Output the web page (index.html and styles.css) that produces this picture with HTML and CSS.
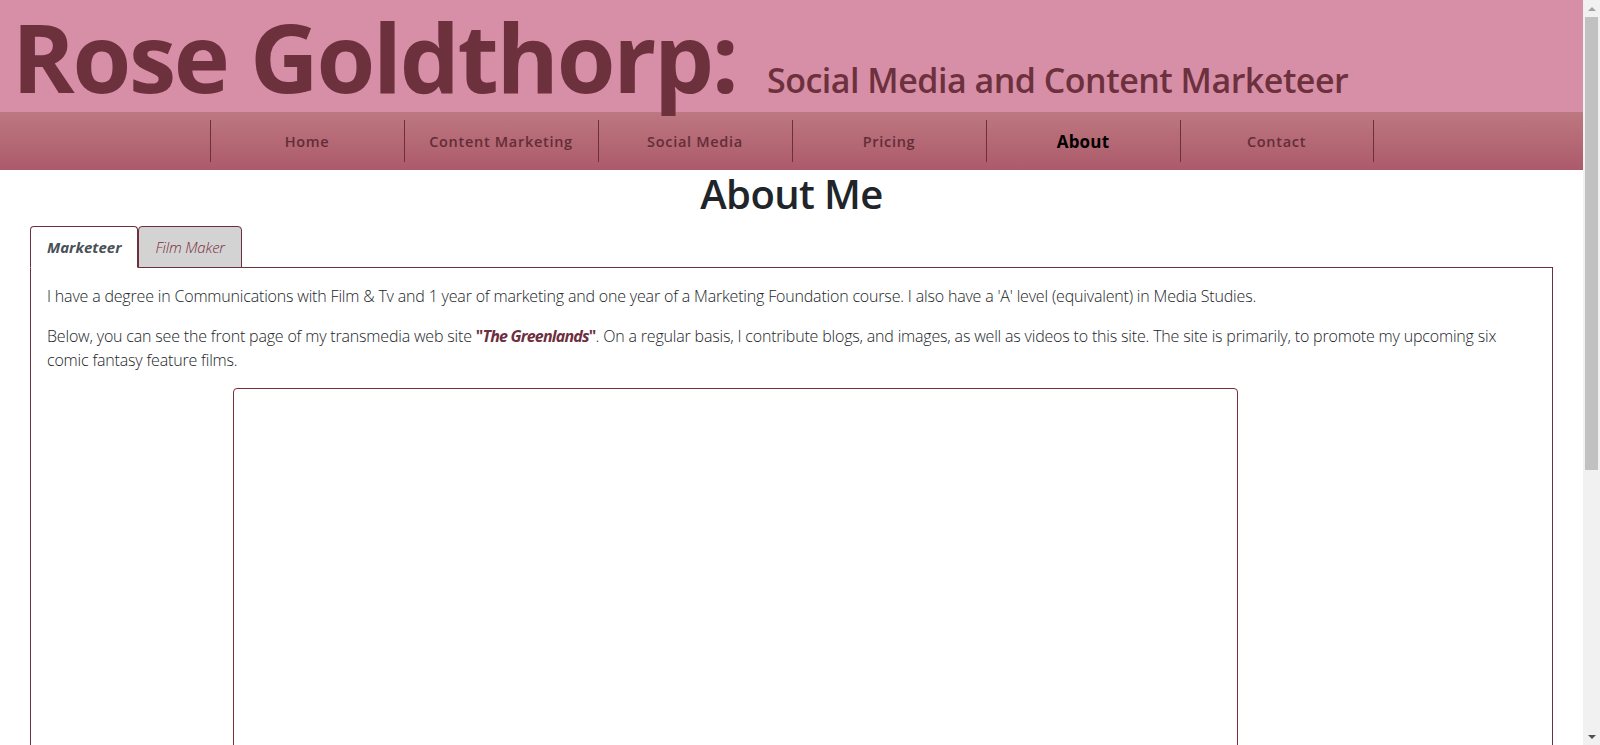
FILE: index.html
```html
<!DOCTYPE html>
<html lang="en">
<head>
<meta charset="utf-8">
<title>Rose Goldthorp - About</title>
<link rel="stylesheet" href="styles.css">
</head>
<body>
<div class="window">
  <div class="viewport">
    <header class="site-header">
      <h1 class="brand">Rose Goldthorp: <span class="tagline">Social Media and Content Marketeer</span></h1>
    </header>
    <nav class="main-nav">
      <ul class="nav-list">
        <li class="nav-item"><a class="nav-link" href="#">Home</a></li>
        <li class="nav-item"><a class="nav-link" href="#">Content Marketing</a></li>
        <li class="nav-item"><a class="nav-link" href="#">Social Media</a></li>
        <li class="nav-item"><a class="nav-link" href="#">Pricing</a></li>
        <li class="nav-item"><a class="nav-link nav-link-active" href="#">About</a></li>
        <li class="nav-item nav-item-last"><a class="nav-link" href="#">Contact</a></li>
      </ul>
    </nav>
    <main class="page">
      <h2 class="page-title">About Me</h2>
      <ul class="tabs">
        <li class="tab tab-active">Marketeer</li>
        <li class="tab tab-inactive">Film Maker</li>
      </ul>
      <section class="tab-panel">
        <p class="copy">I have a degree in Communications with Film &amp; Tv and 1 year of marketing and one year of a Marketing Foundation course. I also have a 'A' level (equivalent) in Media Studies.</p>
        <p class="copy">Below, you can see the front page of my transmedia web site <strong class="site-name">"<em>The Greenlands</em>"</strong>. On a regular basis, I contribute blogs, and images, as well as videos to this site. The site is primarily, to promote my upcoming six comic fantasy feature films.</p>
        <div class="frame"></div>
      </section>
    </main>
  </div>
  <div class="scrollbar" aria-hidden="true">
    <div class="sb-button"><span class="sb-arrow sb-arrow-up"></span></div>
    <div class="sb-track"><div class="sb-thumb"></div></div>
    <div class="sb-button"><span class="sb-arrow sb-arrow-down"></span></div>
  </div>
</div>
</body>
</html>
```
FILE: styles.css
```css
html, body {
  margin: 0;
  padding: 0;
}
body {
  font-family: "Open Sans", "Noto Sans", sans-serif;
  color: #212529;
  background: #ffffff;
}
.window {
  display: flex;
  height: 100vh;
  overflow: hidden;
}
.viewport {
  flex: 1;
  min-width: 0;
  overflow: hidden;
}
.scrollbar {
  width: 17px;
  flex: none;
  display: flex;
  flex-direction: column;
  background: #f1f1f1;
}
.sb-button {
  height: 17px;
  flex: none;
  display: flex;
  align-items: center;
  justify-content: center;
}
.sb-arrow {
  width: 0;
  height: 0;
  border-left: 4px solid transparent;
  border-right: 4px solid transparent;
}
.sb-arrow-up {
  border-bottom: 4px solid #a3a3a3;
}
.sb-arrow-down {
  border-top: 4px solid #505050;
}
.sb-track {
  flex: 1;
  padding: 0 2px;
}
.sb-thumb {
  height: 453px;
  background: #c1c1c1;
}
.site-header {
  background: #d78fa7;
  height: 112px;
  box-sizing: border-box;
  padding: 9px 0 0 12px;
}
.brand {
  margin: 0;
  font-size: 95px;
  line-height: 1;
  font-weight: 700;
  color: #6d313e;
  letter-spacing: -2.3px;
  white-space: nowrap;
}
.tagline {
  font-size: 34px;
  font-weight: 600;
  letter-spacing: -0.5px;
  margin-left: 8px;
}
.main-nav {
  height: 58px;
  box-sizing: border-box;
  background: linear-gradient(#bd7880, #ac5a6b);
  padding: 8px 0;
}
.nav-list {
  list-style: none;
  margin: 0;
  padding: 0;
  display: flex;
  justify-content: center;
  height: 42px;
}
.nav-item {
  width: 194px;
  box-sizing: border-box;
  border-left: 1px solid #6d2f3d;
  display: flex;
  align-items: center;
  justify-content: center;
}
.nav-item-last {
  border-right: 1px solid #6d2f3d;
}
.nav-link {
  color: #5a2731;
  text-decoration: none;
  font-size: 14.5px;
  font-weight: 600;
  letter-spacing: 0.7px;
  opacity: 0.9;
}
.nav-link-active {
  color: #000000;
  font-weight: 700;
  font-size: 17px;
  letter-spacing: 0.2px;
  opacity: 1;
}
.page {
  padding: 0 30px;
}
.page-title {
  margin: 0 0 8px;
  text-align: center;
  font-size: 40px;
  line-height: 1.2;
  font-weight: 600;
  color: #212529;
  letter-spacing: -0.6px;
}
.tabs {
  list-style: none;
  margin: 0;
  padding: 0;
  display: flex;
  border-bottom: 1px solid #6d2f3d;
}
.tab {
  margin-bottom: -1px;
  padding: 0 16px;
  height: 40px;
  line-height: 40px;
  border: 1px solid #6d2f3d;
  border-radius: 4px 4px 0 0;
  font-size: 15px;
  font-style: italic;
}
.tab-active {
  background: #ffffff;
  border-bottom-color: #ffffff;
  color: #495057;
  font-weight: 700;
  letter-spacing: 0;
}
.tab-inactive {
  background: #d3d3d3;
  color: #7b2c3c;
  font-weight: 300;
  letter-spacing: -0.2px;
}
.tab-panel {
  border: 1px solid #6d2f3d;
  border-top: none;
  padding: 16px;
}
.copy {
  margin: 0 0 16px;
  font-size: 16px;
  line-height: 24px;
  font-weight: 300;
  letter-spacing: -0.18px;
}
.site-name {
  color: #6d2f3d;
  font-weight: 700;
  letter-spacing: -0.8px;
}
.frame {
  margin-left: 186px;
  width: 1005px;
  height: 760px;
  box-sizing: border-box;
  border: 1px solid #7b2d3c;
  border-radius: 4px;
}
```
